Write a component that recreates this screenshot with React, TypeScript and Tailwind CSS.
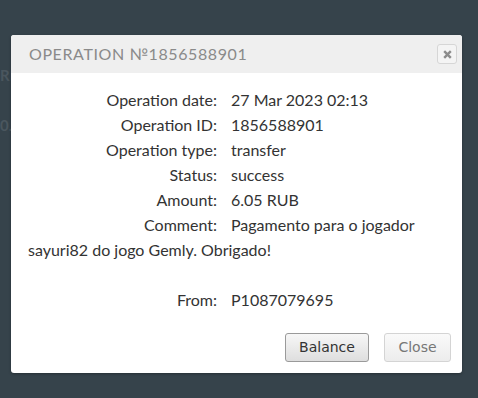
import React from 'react'

const rows: [string, string][] = [
  ['Operation date:', '27 Mar 2023 02:13'],
  ['Operation ID:', '1856588901'],
  ['Operation type:', 'transfer'],
  ['Status:', 'success'],
  ['Amount:', '6.05 RUB'],
]

function Label({ children }: { children: React.ReactNode }) {
  return <span className="inline-block w-[189px] mr-[14px] text-right">{children}</span>
}

export default function App() {
  return (
    <div className="relative w-[478px] h-[398px] overflow-hidden bg-[#36434b] font-['Lato',sans-serif]">
      {/* page behind the overlay */}
      <div className="pt-[64px] text-[15px] text-[#4a565e] font-bold leading-[22px]">
        <p>RE</p>
        <p className="mt-[28px]">0.</p>
      </div>

      <div className="absolute left-[11px] top-[35px] w-[451px] rounded-[3px] bg-white overflow-hidden shadow-[0_1px_3px_rgba(0,0,0,0.3)]">
        <div className="flex items-center justify-between h-[38px] bg-[#efefef] pl-[18px] pr-[5px]">
          <h2 className="text-[16px] tracking-[0.6px] text-[#8a8a8a]">
            OPERATION №1856588901
          </h2>
          <button className="flex items-center justify-center w-[20px] h-[20px] rounded-[3px] border border-[#d6d6d6] bg-[#f4f4f4]">
            <svg width="9" height="9" viewBox="0 0 9 9">
              <path d="M1.2 1.2 L7.8 7.8 M7.8 1.2 L1.2 7.8" stroke="#8c8c8c" strokeWidth="2.4" />
            </svg>
          </button>
        </div>

        <div className="pt-[14px] pl-[17px] pr-[11px] pb-[11px] text-[16px] leading-[25px] text-[#333]">
          {rows.map(([k, v]) => (
            <div key={k}>
              <Label>{k}</Label>
              {v}
            </div>
          ))}
          <div>
            <Label>Comment:</Label>
            Pagamento para o jogador sayuri82 do jogo Gemly. Obrigado!
          </div>
          <div className="h-[25px]" />
          <div>
            <Label>From:</Label>
            P1087079695
          </div>

          <div className="flex justify-end gap-[15px] mt-[21px] font-['DejaVu_Sans',sans-serif] text-[14px]">
            <button className="w-[84px] h-[29px] rounded-[3px] border border-[#9a9a9a] bg-gradient-to-b from-[#f7f7f7] to-[#dedede] text-[#333]">
              Balance
            </button>
            <button className="w-[67px] h-[29px] rounded-[3px] border border-[#d4d4d4] bg-gradient-to-b from-[#fafafa] to-[#ececec] text-[#777]">
              Close
            </button>
          </div>
        </div>
      </div>
    </div>
  )
}
